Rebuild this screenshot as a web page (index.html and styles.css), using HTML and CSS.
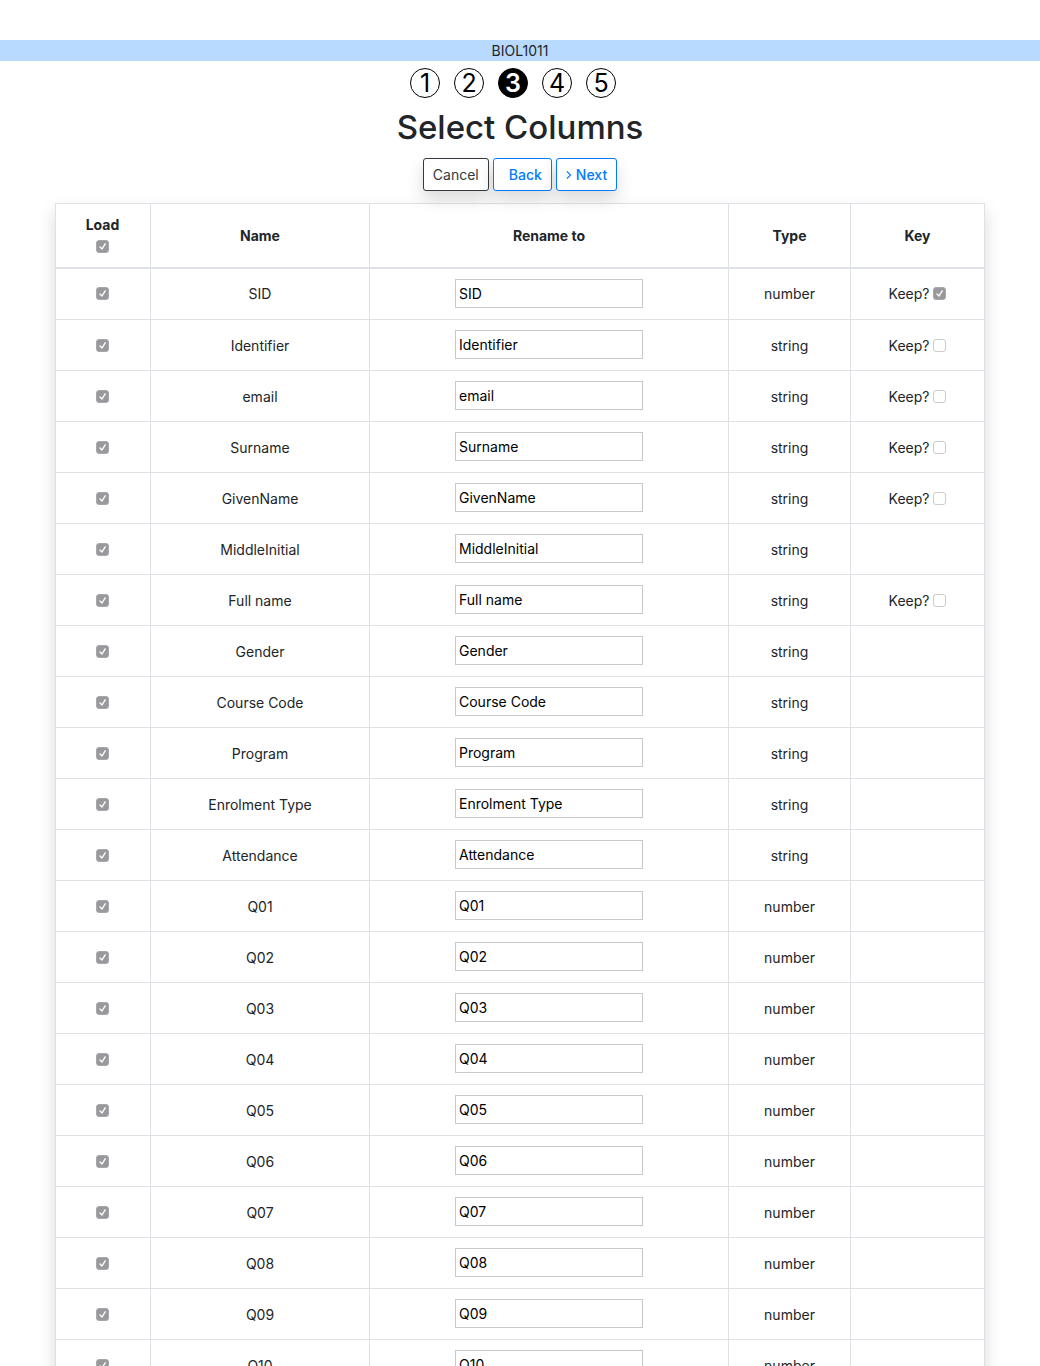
FILE: index.html
```html
<!DOCTYPE html>
<html lang="en">
<head>
<meta charset="utf-8">
<meta name="viewport" content="width=device-width, initial-scale=1">
<title>Select Columns</title>
<link rel="stylesheet" href="styles.css">
</head>
<body>
<div class="course">BIOL1011</div>
<main class="container">
<ol class="steps">
<li class="step">1</li>
<li class="step">2</li>
<li class="step step-current" aria-current="step">3</li>
<li class="step">4</li>
<li class="step">5</li>
</ol>
<h1 class="title">Select Columns</h1>
<div class="actions">
<button class="btn btn-dark" type="button">Cancel</button>
<button class="btn btn-back" type="button">Back</button>
<button class="btn btn-next" type="button"><svg class="chevron" viewBox="0 0 6 10" aria-hidden="true"><path d="M1 1.5 4.5 5 1 8.5" fill="none" stroke="currentColor" stroke-width="1.1"/></svg>Next</button>
</div>
<table class="columns">
<colgroup><col class="col-load"><col class="col-name"><col class="col-rename"><col class="col-type"><col class="col-key"></colgroup>
<thead>
<tr><th scope="col"><label class="load-all">Load<input class="check" type="checkbox" checked disabled></label></th><th scope="col">Name</th><th scope="col">Rename to</th><th scope="col">Type</th><th scope="col">Key</th></tr>
</thead>
<tbody>
<tr><td><input class="check" type="checkbox" aria-label="Load SID" checked disabled></td><td>SID</td><td><input class="rename" type="text" aria-label="Rename SID" value="SID"></td><td>number</td><td><label class="keep">Keep?<input class="check" type="checkbox" checked disabled></label></td></tr>
<tr><td><input class="check" type="checkbox" aria-label="Load Identifier" checked disabled></td><td>Identifier</td><td><input class="rename" type="text" aria-label="Rename Identifier" value="Identifier"></td><td>string</td><td><label class="keep">Keep?<input class="check" type="checkbox" disabled></label></td></tr>
<tr><td><input class="check" type="checkbox" aria-label="Load email" checked disabled></td><td>email</td><td><input class="rename" type="text" aria-label="Rename email" value="email"></td><td>string</td><td><label class="keep">Keep?<input class="check" type="checkbox" disabled></label></td></tr>
<tr><td><input class="check" type="checkbox" aria-label="Load Surname" checked disabled></td><td>Surname</td><td><input class="rename" type="text" aria-label="Rename Surname" value="Surname"></td><td>string</td><td><label class="keep">Keep?<input class="check" type="checkbox" disabled></label></td></tr>
<tr><td><input class="check" type="checkbox" aria-label="Load GivenName" checked disabled></td><td>GivenName</td><td><input class="rename" type="text" aria-label="Rename GivenName" value="GivenName"></td><td>string</td><td><label class="keep">Keep?<input class="check" type="checkbox" disabled></label></td></tr>
<tr><td><input class="check" type="checkbox" aria-label="Load MiddleInitial" checked disabled></td><td>MiddleInitial</td><td><input class="rename" type="text" aria-label="Rename MiddleInitial" value="MiddleInitial"></td><td>string</td><td></td></tr>
<tr><td><input class="check" type="checkbox" aria-label="Load Full name" checked disabled></td><td>Full name</td><td><input class="rename" type="text" aria-label="Rename Full name" value="Full name"></td><td>string</td><td><label class="keep">Keep?<input class="check" type="checkbox" disabled></label></td></tr>
<tr><td><input class="check" type="checkbox" aria-label="Load Gender" checked disabled></td><td>Gender</td><td><input class="rename" type="text" aria-label="Rename Gender" value="Gender"></td><td>string</td><td></td></tr>
<tr><td><input class="check" type="checkbox" aria-label="Load Course Code" checked disabled></td><td>Course Code</td><td><input class="rename" type="text" aria-label="Rename Course Code" value="Course Code"></td><td>string</td><td></td></tr>
<tr><td><input class="check" type="checkbox" aria-label="Load Program" checked disabled></td><td>Program</td><td><input class="rename" type="text" aria-label="Rename Program" value="Program"></td><td>string</td><td></td></tr>
<tr><td><input class="check" type="checkbox" aria-label="Load Enrolment Type" checked disabled></td><td>Enrolment Type</td><td><input class="rename" type="text" aria-label="Rename Enrolment Type" value="Enrolment Type"></td><td>string</td><td></td></tr>
<tr><td><input class="check" type="checkbox" aria-label="Load Attendance" checked disabled></td><td>Attendance</td><td><input class="rename" type="text" aria-label="Rename Attendance" value="Attendance"></td><td>string</td><td></td></tr>
<tr><td><input class="check" type="checkbox" aria-label="Load Q01" checked disabled></td><td>Q01</td><td><input class="rename" type="text" aria-label="Rename Q01" value="Q01"></td><td>number</td><td></td></tr>
<tr><td><input class="check" type="checkbox" aria-label="Load Q02" checked disabled></td><td>Q02</td><td><input class="rename" type="text" aria-label="Rename Q02" value="Q02"></td><td>number</td><td></td></tr>
<tr><td><input class="check" type="checkbox" aria-label="Load Q03" checked disabled></td><td>Q03</td><td><input class="rename" type="text" aria-label="Rename Q03" value="Q03"></td><td>number</td><td></td></tr>
<tr><td><input class="check" type="checkbox" aria-label="Load Q04" checked disabled></td><td>Q04</td><td><input class="rename" type="text" aria-label="Rename Q04" value="Q04"></td><td>number</td><td></td></tr>
<tr><td><input class="check" type="checkbox" aria-label="Load Q05" checked disabled></td><td>Q05</td><td><input class="rename" type="text" aria-label="Rename Q05" value="Q05"></td><td>number</td><td></td></tr>
<tr><td><input class="check" type="checkbox" aria-label="Load Q06" checked disabled></td><td>Q06</td><td><input class="rename" type="text" aria-label="Rename Q06" value="Q06"></td><td>number</td><td></td></tr>
<tr><td><input class="check" type="checkbox" aria-label="Load Q07" checked disabled></td><td>Q07</td><td><input class="rename" type="text" aria-label="Rename Q07" value="Q07"></td><td>number</td><td></td></tr>
<tr><td><input class="check" type="checkbox" aria-label="Load Q08" checked disabled></td><td>Q08</td><td><input class="rename" type="text" aria-label="Rename Q08" value="Q08"></td><td>number</td><td></td></tr>
<tr><td><input class="check" type="checkbox" aria-label="Load Q09" checked disabled></td><td>Q09</td><td><input class="rename" type="text" aria-label="Rename Q09" value="Q09"></td><td>number</td><td></td></tr>
<tr><td><input class="check" type="checkbox" aria-label="Load Q10" checked disabled></td><td>Q10</td><td><input class="rename" type="text" aria-label="Rename Q10" value="Q10"></td><td>number</td><td></td></tr>
</tbody>
</table>
</main>
</body>
</html>
```
FILE: styles.css
```css
*, *::before, *::after { box-sizing: border-box; }

body {
  margin: 0;
  padding-top: 40px;
  background: #fff;
  color: #212529;
  font: 14px/21px Inter, "Liberation Sans", sans-serif;
  text-align: center;
}

.course { background: #b8daff; }

.container {
  max-width: 960px;
  margin: 0 auto;
  padding: 0 15px;
}

/* Wizard progress */
.steps {
  display: flex;
  justify-content: center;
  margin: 7px 0 8px;
  padding: 0;
  list-style: none;
}

.step {
  width: 30px;
  height: 30px;
  margin-right: 14px;
  border: 1px solid #000;
  border-radius: 50%;
  color: #000;
  font-size: 25px;
  line-height: 28px;
}

.step-current {
  background: #000;
  color: #fff;
  font-weight: 600;
}

.title {
  margin: 0 0 10px;
  font-size: 33px;
  font-weight: 500;
  line-height: 42px;
}

.actions {
  display: flex;
  justify-content: center;
  gap: 4px;
  margin-bottom: 12px;
}

.btn {
  display: flex;
  align-items: center;
  gap: 4px;
  padding: 5px 9px;
  border: 1px solid #007bff;
  border-radius: 3px;
  background: #fff;
  box-shadow: 0 8px 16px rgba(0, 0, 0, .15);
  color: #007bff;
  font: 500 14px/21px Inter, "Liberation Sans", sans-serif;
}

.btn-dark {
  border-color: #343a40;
  color: #343a40;
  font-weight: 400;
}

.btn-back { padding-left: 15px; }

.chevron {
  width: 6px;
  height: 10px;
}

/* Column picker */
.columns {
  width: 100%;
  table-layout: fixed;
  border-collapse: collapse;
  box-shadow: 0 8px 16px rgba(0, 0, 0, .15);
}

.col-load { width: 95px; }
.col-name { width: 219px; }
.col-type { width: 122px; }
.col-key { width: 134px; }

.columns th,
.columns td {
  height: 51px;
  padding: 10px;
  border: 1px solid #dee2e6;
  vertical-align: middle;
}

.columns th {
  height: 64px;
  border-bottom-width: 2px;
  font-weight: 700;
}

/* The first row also carries half of the thicker header rule */
.columns tbody tr:first-child td { height: 52px; }

.columns td:nth-child(3) { padding-bottom: 11px; }

.columns th:first-child,
.columns td:first-child { padding-right: 11px; }

.load-all {
  display: flex;
  flex-direction: column;
  align-items: center;
}

.load-all .check { margin: 5px 0 3px; }

.keep {
  display: flex;
  align-items: center;
  justify-content: center;
  gap: 4px;
}

.check {
  appearance: none;
  display: block;
  width: 13px;
  height: 13px;
  margin: 0 auto;
  border: 1px solid #ccc;
  border-radius: 3px;
  background: #fff;
}

.keep .check { margin: 0; }

.check:checked {
  border-color: #a8a8ac;
  background: #98989d url("data:image/svg+xml,%3Csvg xmlns='http://www.w3.org/2000/svg' viewBox='0 0 11 11'%3E%3Cpath d='M3 6l2 2 3.2-5.2' fill='none' stroke='%23fff' stroke-width='1.4' stroke-linecap='round' stroke-linejoin='round'/%3E%3C/svg%3E") center / 11px 11px no-repeat;
}

.rename {
  display: block;
  width: 188px;
  max-width: 100%;
  height: 29px;
  margin: 0 auto;
  padding: 0 3px;
  border: 1px solid #c8c8c8;
  border-radius: 0;
  background: #fff;
  color: #000;
  font: inherit;
}
```
